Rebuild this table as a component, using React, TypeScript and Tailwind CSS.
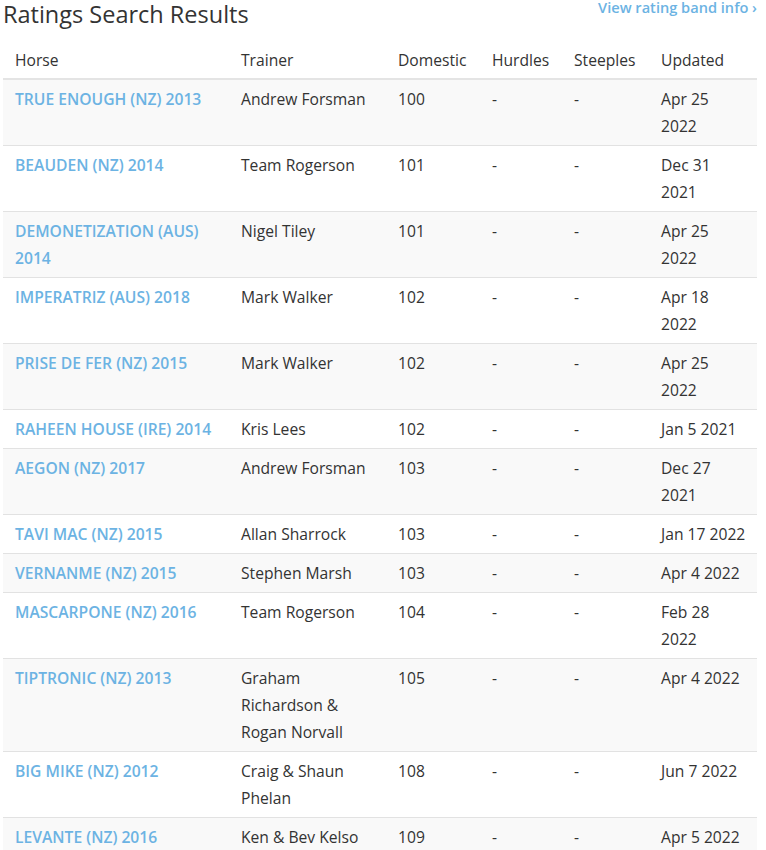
const rows = [
  ["TRUE ENOUGH (NZ) 2013", "Andrew Forsman", "100", "Apr 25 2022"],
  ["BEAUDEN (NZ) 2014", "Team Rogerson", "101", "Dec 31 2021"],
  ["DEMONETIZATION (AUS) 2014", "Nigel Tiley", "101", "Apr 25 2022"],
  ["IMPERATRIZ (AUS) 2018", "Mark Walker", "102", "Apr 18 2022"],
  ["PRISE DE FER (NZ) 2015", "Mark Walker", "102", "Apr 25 2022"],
  ["RAHEEN HOUSE (IRE) 2014", "Kris Lees", "102", "Jan 5 2021"],
  ["AEGON (NZ) 2017", "Andrew Forsman", "103", "Dec 27 2021"],
  ["TAVI MAC (NZ) 2015", "Allan Sharrock", "103", "Jan 17 2022"],
  ["VERNANME (NZ) 2015", "Stephen Marsh", "103", "Apr 4 2022"],
  ["MASCARPONE (NZ) 2016", "Team Rogerson", "104", "Feb 28 2022"],
  ["TIPTRONIC (NZ) 2013", "Graham Richardson & Rogan Norvall", "105", "Apr 4 2022"],
  ["BIG MIKE (NZ) 2012", "Craig & Shaun Phelan", "108", "Jun 7 2022"],
  ["LEVANTE (NZ) 2016", "Ken & Bev Kelso", "109", "Apr 5 2022"],
];

const cell = "px-3 pt-[6px] pb-[5px] align-top";
const head = "px-3 pt-[7px] pb-[4px] text-left font-normal";

export default function App() {
  return (
    <div className="min-h-[850px] bg-white pl-[3px] pr-[9px] text-[#333] font-['Open_Sans',sans-serif]">
      <div className="flex h-[40px] items-start justify-between">
        <h1 className="text-[23.5px] leading-[28px] text-[#333]">Ratings Search Results</h1>
        <a href="#" className="-mt-[3px] text-[14.6px] font-semibold leading-[20px] text-[#6cb3e3]">
          View rating band info ›
        </a>
      </div>
      <table className="w-[754px] table-fixed border-collapse text-[15.65px] leading-[27px]">
        <colgroup>
          <col className="w-[226px]" />
          <col className="w-[157px]" />
          <col className="w-[94px]" />
          <col className="w-[82px]" />
          <col className="w-[87px]" />
          <col className="w-[108px]" />
        </colgroup>
        <thead>
          <tr className="border-b-2 border-[#e4e4e4]">
            <th className={head}>Horse</th>
            <th className={head}>Trainer</th>
            <th className={head}>Domestic</th>
            <th className={head}>Hurdles</th>
            <th className={head}>Steeples</th>
            <th className={head}>Updated</th>
          </tr>
        </thead>
        <tbody>
          {rows.map(([horse, trainer, dom, upd], i) => (
            <tr key={horse} className={`border-t border-[#e2e2e2] ${i % 2 === 0 ? "bg-[#f9f9f9]" : "bg-white"}`}>
              <td className={cell}>
                <a href="#" className="font-semibold text-[#6cb3e3]">{horse}</a>
              </td>
              <td className={cell}>{trainer}</td>
              <td className={cell}>{dom}</td>
              <td className={cell}>-</td>
              <td className={cell}>-</td>
              <td className="pl-3 pr-[10px] pt-[6px] pb-[5px] align-top">{upd}</td>
            </tr>
          ))}
        </tbody>
      </table>
    </div>
  );
}
